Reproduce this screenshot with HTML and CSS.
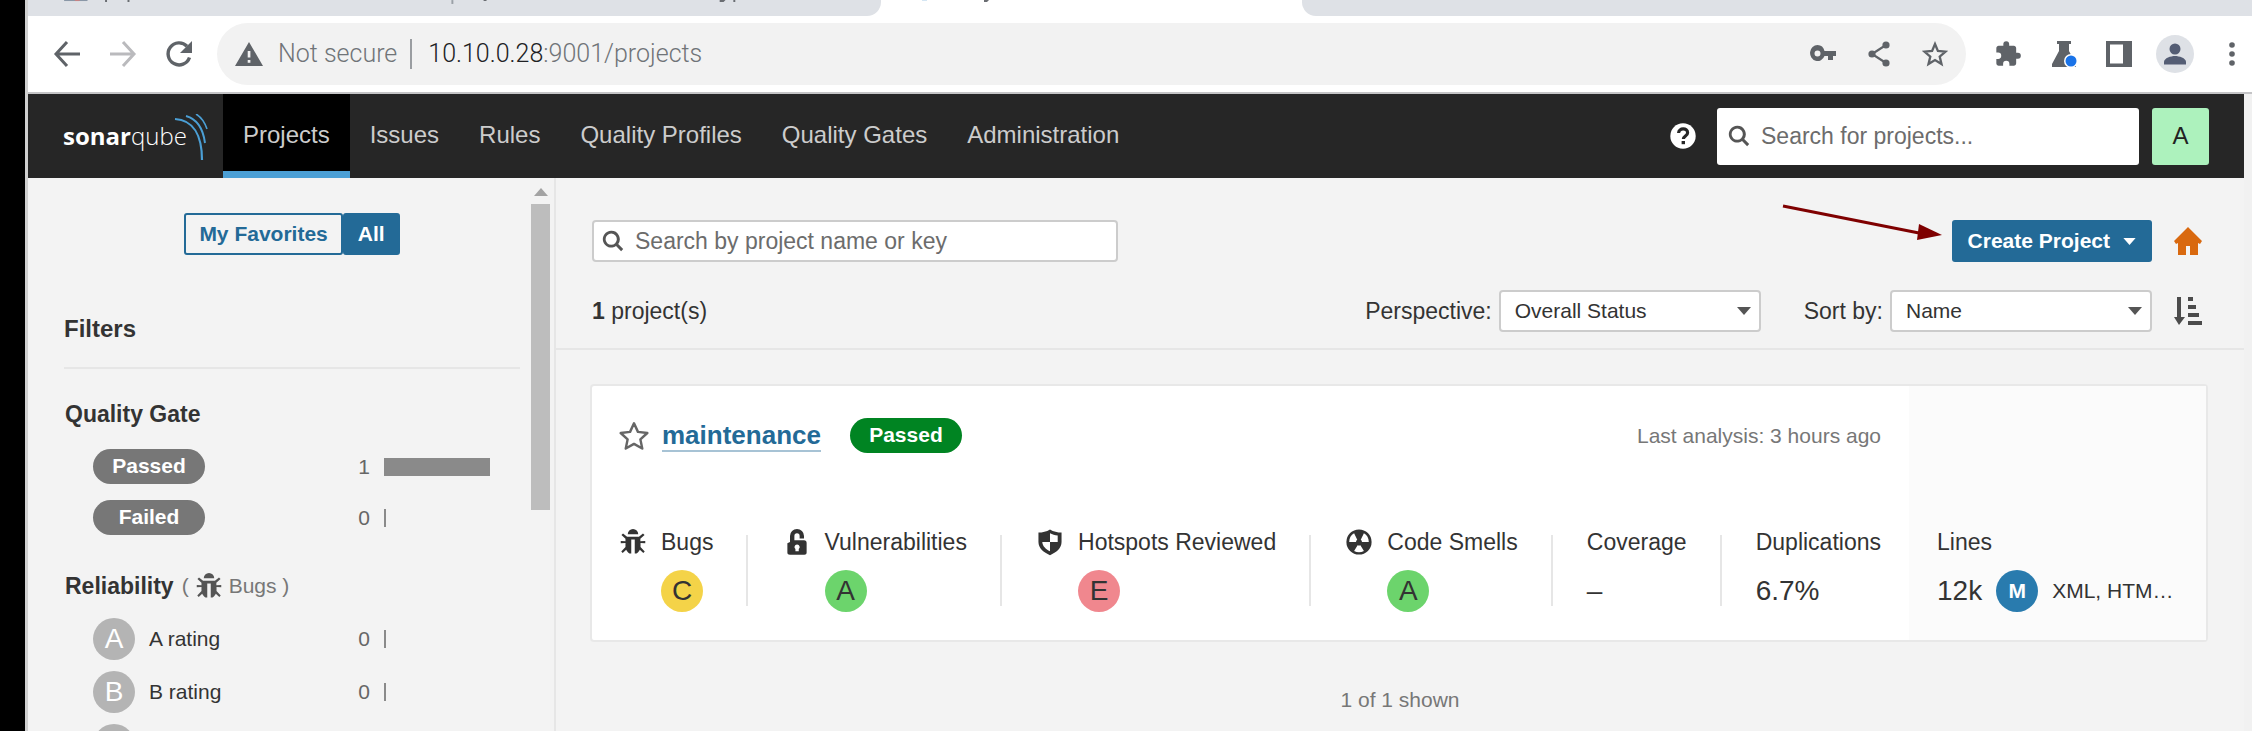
FILE: index.html
```html
<!DOCTYPE html>
<html lang="en">
<head>
<meta charset="utf-8">
<title>Projects</title>
<link rel="stylesheet" href="styles.css">
</head>
<body>
<svg class="sprite" aria-hidden="true">
  <symbol id="bug" viewBox="0 0 16 16"><path d="M5 3.600a3 3 0 0 1 6 0zM12.200 7.600 15 7.400v1.300l-2.700-.1v2.200l2.400 2.600-.8.9-2-1.900c-.4.9-1 1.600-1.900 2.100H9V6.500H7v8H6c-.9-.5-1.500-1.200-1.900-2.100l-2 1.900-.8-.9 2.400-2.600V8.600L1 8.700V7.400l2.700.2V6.200L1.400 4l.9-.8L4.600 5h6.800l2.300-1.800.9.800-2.400 2.200z"/></symbol>
  <symbol id="search" viewBox="0 0 16 16"><path fill-rule="evenodd" d="M6.700.6a6.100 6.100 0 1 0 3.500 11.100l3.700 3.700 1.500-1.500-3.600-3.700A6.100 6.100 0 0 0 6.700.6zm0 2a4.100 4.100 0 1 1 0 8.200 4.100 4.100 0 0 1 0-8.200z"/></symbol>
  <symbol id="star" viewBox="0 0 16 16"><path d="M8 1.200l2.100 4.600 5 .6-3.700 3.400 1 4.900L8 12.200l-4.400 2.500 1-4.900L.9 6.400l5-.6z" fill="none" stroke="currentColor" stroke-width="1.300" stroke-linejoin="round"/></symbol>
  <symbol id="caret" viewBox="0 0 14 8"><path d="M0 0h14L7 8z"/></symbol>
</svg>
<div class="edge"></div>
<div class="window">
  <header class="chrome">
    <div class="tabs">
      <svg class="tab-marks" width="860" height="5" viewBox="0 0 860 5" aria-hidden="true"><path fill="#8593a3" d="M37 0h24v1H37z"/><path fill="#c98080" d="M48 0h5v1h-5z"/><path fill="#6a6d72" d="M79 0h2v2h-2zM102 0h2v2h-2zM467 0h3v1h-3zM709 0h6l-2 2h-4zM723 0h2v2h-2z"/><path fill="#9aa0a6" d="M434 0h2v4h-2z"/></svg>
      <div class="tab-active"><svg width="134" height="4" viewBox="0 0 134 4" aria-hidden="true"><path fill="#6a6d72" d="M117 0h5l-2 2h-3z"/><path fill="#d5e6f3" d="M55 0h5v1h-5z"/></svg></div>
    </div>
    <div class="toolbar">
      <button class="tool" aria-label="Back"><svg width="28" height="28" viewBox="0 0 28 28"><path d="M14 2 3 14l11 12M3 14h24" fill="none" stroke="#5f6368" stroke-width="3"/></svg></button>
      <button class="tool" aria-label="Forward"><svg width="28" height="28" viewBox="0 0 28 28"><path d="M14 2l11 12-11 12M25 14H1" fill="none" stroke="#bababd" stroke-width="3"/></svg></button>
      <button class="tool" aria-label="Reload"><svg width="28" height="28" viewBox="0 0 28 28"><path d="M24.500 17.500A11 11 0 1 1 22 6.200" fill="none" stroke="#5f6368" stroke-width="3.400"/><path d="M27 1v12H15z" fill="#5f6368"/></svg></button>
      <div class="address">
        <svg width="28" height="24" viewBox="0 0 28 24"><path fill="#5f6368" fill-rule="evenodd" d="M14 0 0 24h28zM12.700 9h2.700v6.500h-2.700zm0 9h2.700v2.700h-2.700z"/></svg>
        <span class="insecure">Not secure</span>
        <span class="url"><b>10.10.0.28</b>:9001/projects</span>
        <button class="tool" aria-label="Passwords"><svg width="26" height="26" viewBox="0 0 26 26"><path fill="#5f6368" fill-rule="evenodd" d="M7.500 4a7.500 8 0 1 0 7 11H18v4h5v-4h3v-5H14.500a7.500 8 0 0 0-7-6zm0 5.500a3 3 0 1 1 0 6 3 3 0 0 1 0-6z"/></svg></button>
        <button class="tool" aria-label="Share"><svg width="26" height="26" viewBox="0 0 26 26"><path d="M20 4 6 13l14 9" fill="none" stroke="#5f6368" stroke-width="2.200"/><g fill="#5f6368"><circle cx="20" cy="4" r="3.600"/><circle cx="6" cy="13" r="3.600"/><circle cx="20" cy="22" r="3.600"/></g></svg></button>
        <button class="tool" aria-label="Bookmark"><svg width="26" height="26" viewBox="0 0 26 26"><path d="M13 3l2.900 7 7.600.6-5.800 5 1.800 7.400-6.500-4-6.500 4 1.800-7.400-5.800-5 7.600-.6z" fill="none" stroke="#5f6368" stroke-width="2.300"/></svg></button>
      </div>
      <div class="extensions">
        <button class="tool" aria-label="Extensions"><svg width="28" height="28" viewBox="0 0 24 24"><path fill="#5f6368" d="M20.500 11H19V7c0-1.100-.9-2-2-2h-4V3.500a2.500 2.500 0 0 0-5 0V5H4c-1.100 0-2 .9-2 2v3.800h1.500a2.700 2.700 0 0 1 0 5.400H2V20c0 1.100.9 2 2 2h3.800v-1.500a2.700 2.700 0 0 1 5.400 0V22H17c1.100 0 2-.9 2-2v-4h1.500a2.500 2.500 0 0 0 0-5z"/></svg></button>
        <button class="tool" aria-label="Labs"><svg width="28" height="28" viewBox="0 0 28 28"><path fill="#5f6368" d="M7 1h14v3h-2v7l7 13v3H2v-3l7-13V4H7z"/><circle cx="21" cy="21" r="7" fill="#fff"/><circle cx="21" cy="21" r="5.500" fill="#1a73e8"/></svg></button>
        <button class="tool" aria-label="Side panel"><svg width="26" height="26" viewBox="0 0 26 26"><path fill="#5f6368" fill-rule="evenodd" d="M0 0h26v26H0zM4 3.500h13v19H4z"/></svg></button>
        <button class="tool profile" aria-label="Profile"><svg width="38" height="38" viewBox="0 0 38 38"><circle cx="19" cy="19" r="19" fill="#dee1e6"/><circle cx="19" cy="14" r="5.500" fill="#545d74"/><path d="M8 29.500v-2.500c0-4 7-6 11-6s11 2 11 6v2.500z" fill="#545d74"/></svg></button>
        <button class="tool" aria-label="Menu"><svg width="6" height="26" viewBox="0 0 6 26" fill="#5f6368"><circle cx="3" cy="4" r="2.800"/><circle cx="3" cy="13" r="2.800"/><circle cx="3" cy="22" r="2.800"/></svg></button>
      </div>
    </div>
  </header>

  <div class="viewport">
    <div class="app">
      <nav class="navbar">
        <a class="logo" href="#"><strong>sonar</strong>qube<svg class="waves" width="34" height="48" viewBox="0 0 34 48" fill="none" stroke="#4b9fd5"><path d="M1 5c18 1 27 16 27 41" stroke-width="2.200"/><path d="M12 2c11 3 17 12 19 27" stroke-width="2"/><path d="M22 0c5 3 9 9 11 15" stroke-width="1.600"/></svg></a>
        <a class="nav-item current" href="#">Projects</a>
        <a class="nav-item" href="#">Issues</a>
        <a class="nav-item" href="#">Rules</a>
        <a class="nav-item" href="#">Quality Profiles</a>
        <a class="nav-item" href="#">Quality Gates</a>
        <a class="nav-item" href="#">Administration</a>
        <button class="help" aria-label="Help"><svg width="26" height="26" viewBox="0 0 26 26"><circle cx="13" cy="13" r="12.700" fill="#fff"/><path d="M8.600 10c.2-5.400 9-5.400 9-.3 0 3.300-4.200 3.200-4.200 6.300" fill="none" stroke="#262626" stroke-width="3.200"/><path fill="#262626" d="M11.600 18h3.400v3.200h-3.400z"/></svg></button>
        <label class="global-search"><svg class="glyph" width="22" height="22"><use href="#search"/></svg><input type="search" placeholder="Search for projects..." aria-label="Search for projects"></label>
        <button class="avatar">A</button>
      </nav>

      <div class="columns">
        <aside class="sidebar">
          <div class="side-content">
            <div class="toggle"><button>My Favorites</button><button class="on">All</button></div>
            <h2 class="filters">Filters</h2>
            <h3 class="facet">Quality Gate</h3>
            <ul class="facet-list">
              <li><span class="pill gray">Passed</span><span class="count">1</span><span class="bar full"></span></li>
              <li><span class="pill gray">Failed</span><span class="count">0</span><span class="bar"></span></li>
            </ul>
            <h3 class="facet">Reliability <span class="note">( <svg class="glyph" width="28" height="28"><use href="#bug"/></svg> Bugs )</span></h3>
            <ul class="facet-list ratings">
              <li><span class="rating off">A</span><span class="rating-name">A rating</span><span class="count">0</span><span class="bar"></span></li>
              <li><span class="rating off">B</span><span class="rating-name">B rating</span><span class="count">0</span><span class="bar"></span></li>
              <li><span class="rating off"></span></li>
            </ul>
          </div>
          <div class="scrollbar"><svg width="14" height="8" viewBox="0 0 14 8"><path d="M0 8h14L7 0z" fill="#a3a3a3"/></svg><div class="thumb"></div></div>
        </aside>

        <main class="main">
          <div class="controls">
            <div class="row">
              <label class="project-search"><svg class="glyph" width="22" height="22"><use href="#search"/></svg><input type="search" placeholder="Search by project name or key" aria-label="Search by project name or key"></label>
              <div class="create">
                <svg class="arrow" width="160" height="36" viewBox="0 0 160 36" aria-hidden="true"><path d="M1 2l136 27" stroke="#7f0000" stroke-width="3"/><path d="M137 20l23 11-25 5z" fill="#7f0000"/></svg>
                <button class="create-button">Create Project <svg width="13" height="7"><use href="#caret"/></svg></button>
              </div>
              <button class="tool home" aria-label="Homepage"><svg width="28" height="28" viewBox="0 0 28 28"><path fill="#d9690f" d="M14 0 0 14l2 3 2-1v12h8v-9h4v9h8V16l2 1 2-3z"/></svg></button>
            </div>
            <div class="row">
              <p class="total"><strong>1</strong> project(s)</p>
              <label class="picker perspective">Perspective:<span class="select"><select><option>Overall Status</option></select><svg width="14" height="8"><use href="#caret"/></svg></span></label>
              <label class="picker">Sort by:<span class="select"><select><option>Name</option></select><svg width="14" height="8"><use href="#caret"/></svg></span></label>
              <button class="tool sort" aria-label="Sort order"><svg width="28" height="28" viewBox="0 0 28 28" fill="#4b4b4b"><path d="M3 0h4v20h4L5 28l-5-8h3zM14 0h5v4h-5zM14 8h8v4h-8zM14 16h11v4H14zM14 24h14v4H14z"/></svg></button>
            </div>
          </div>

          <article class="card">
            <div class="card-main">
              <div class="card-head">
                <button class="tool fav" aria-label="Add to favorites"><svg width="30" height="30"><use href="#star"/></svg></button>
                <a class="project" href="#">maintenance</a>
                <span class="pill green">Passed</span>
                <span class="analysis">Last analysis: 3 hours ago</span>
              </div>
              <div class="metrics">
                <div class="metric with-icon"><svg class="icon" width="28" height="28"><use href="#bug"/></svg><span class="name">Bugs</span><span class="value"><span class="rating c">C</span></span></div>
                <div class="metric with-icon"><svg class="icon" width="28" height="28" viewBox="0 0 16 16"><path fill-rule="evenodd" d="M4 8V4.500a4 4 0 0 1 8 0V6H9.500V4.500a1.500 1.500 0 0 0-3 0V7H12c1 0 1.500.5 1.500 1.500V14c0 .8-.5 1.300-1.300 1.300H4c-1 0-1.500-.5-1.500-1.300V8.700zM8 9.500a1.400 1.400 0 0 0-.9 2.500v1.300h1.900V12A1.400 1.400 0 0 0 8 9.500z"/></svg><span class="name">Vulnerabilities</span><span class="value"><span class="rating a">A</span></span></div>
                <div class="metric with-icon"><svg class="icon" width="28" height="28" viewBox="0 0 16 16"><path fill-rule="evenodd" d="M8 .8C10 2 12.300 2.600 14.600 2.600V8c0 3.500-3 6-6.600 7.500C4.400 14 1.400 11.500 1.400 8V2.600C3.700 2.600 6 2 8 .8zM8 3v5H3.600c.1 2.300 1.900 4.100 4.400 5.300V8h4.400V4.300C10.800 4.200 9.300 3.700 8 3z"/></svg><span class="name">Hotspots Reviewed</span><span class="value"><span class="rating e">E</span></span></div>
                <div class="metric with-icon"><svg class="icon" width="28" height="28" viewBox="0 0 16 16"><path fill-rule="evenodd" d="M8 .8a7.200 7.200 0 1 0 0 14.400A7.200 7.200 0 0 0 8 .8zM5.200 3 7 6.700C6.500 7.100 6.300 7.500 6.300 8H2.400c0-2.200 1-4 2.800-5zm5.600 0c1.800 1 2.800 2.800 2.800 5H9.700c0-.5-.2-.9-.7-1.300zM8 10c.3 0 .6-.1.800-.2l2 3.300c-1.800 1-3.800 1-5.600 0l2-3.300c.2.100.5.200.8.200z"/></svg><span class="name">Code Smells</span><span class="value"><span class="rating a">A</span></span></div>
                <div class="metric"><span class="name">Coverage</span><span class="value">–</span></div>
                <div class="metric"><span class="name">Duplications</span><span class="value">6.7%</span></div>
              </div>
            </div>
            <div class="card-side">
              <div class="metric"><span class="name">Lines</span><span class="value">12k <span class="rating size">M</span><span class="langs">XML, HTM…</span></span></div>
            </div>
          </article>
          <p class="shown">1 of 1 shown</p>
        </main>
      </div>
    </div>
    <div class="page-scroll"></div>
  </div>
</div>
</body>
</html>
```

FILE: styles.css
```css
* { box-sizing: border-box; }

body {
  margin: 0;
  height: 100vh;
  display: flex;
  overflow: hidden;
  background: #f3f3f3;
  color: #333;
  font: 23px/28px "Liberation Sans", Arial, sans-serif;
}

h2, h3, p, ul { margin: 0; padding: 0; }
ul { list-style: none; }
a { text-decoration: none; }
svg { display: block; flex: none; }
.sprite { position: absolute; width: 0; height: 0; }
button { font: inherit; cursor: pointer; }
input, select { font: inherit; color: inherit; }

.tool {
  display: flex;
  flex: none;
  padding: 0;
  border: 0;
  background: none;
  color: #666;
}

.edge { flex: none; width: 28px; background: #000; border-right: 3px solid #d0d0d0; }
.window { flex: 1; min-width: 0; display: flex; flex-direction: column; }

/* Browser chrome */
.chrome { flex: none; background: #fff; border-bottom: 2px solid #c4c4c6; }
.tabs { display: flex; height: 16px; background: #dee1e6; }
.tab-marks { width: 839px; height: 5px; }
.tabs .tab-marks { overflow: hidden; }
.tab-active { width: 449px; background: #fff; position: relative; }
.tab-active svg { position: relative; z-index: 1; }
.tab-active::before, .tab-active::after {
  content: "";
  position: absolute;
  bottom: 0;
  width: 14px;
  height: 16px;
  background: #dee1e6;
}
.tab-active::before { left: 0; border-bottom-right-radius: 14px; }
.tab-active::after { right: 0; border-bottom-left-radius: 14px; }

.toolbar { display: flex; align-items: center; gap: 28px; padding: 7px 17px 7px 25px; }
.address {
  flex: 1;
  display: flex;
  align-items: center;
  gap: 30px;
  height: 62px;
  margin-left: -4px;
  padding: 0 18px;
  border-radius: 31px;
  background: #f2f2f2;
  color: #707478;
  font: 300 25px/30px Roboto, sans-serif;
}
.insecure { margin-left: -15px; padding-right: 13px; border-right: 2px solid #9a9da1; }
.url { flex: 1; margin-left: -14px; }
.url b { font-weight: 300; color: #202124; }
.extensions { display: flex; align-items: center; gap: 28px; }
.extensions .profile { margin-left: -4px; }
.extensions .tool:last-child { margin-left: 7px; }

/* Page */
.viewport { flex: 1; min-height: 0; display: flex; }
.page-scroll { flex: none; width: 8px; background: #f1f1f1; }
.app { flex: 1; min-width: 0; display: flex; flex-direction: column; }

.navbar {
  flex: none;
  display: flex;
  height: 84px;
  align-items: center;
  padding-right: 35px;
  background: #262626;
}
.logo {
  position: relative;
  width: 195px;
  padding-left: 35px;
  color: #fff;
  font: 300 24px/32px "Open Sans", sans-serif;
}
.logo strong { font-weight: 700; }
.waves { position: absolute; left: 146px; top: -6px; }
.nav-item {
  align-self: stretch;
  padding: 0 20px;
  border-bottom: 7px solid transparent;
  color: #ccc;
  font-size: 24px;
  line-height: 82px;
  white-space: nowrap;
}
.nav-item.current { background: #000; border-color: #4b9fd5; }
.help { margin-left: auto; padding: 0; border: 0; background: none; }
.global-search {
  display: flex;
  align-items: center;
  gap: 11px;
  width: 422px;
  height: 57px;
  margin: 0 13px 0 21px;
  padding: 0 11px;
  border-radius: 3px;
  background: #fff;
}
.glyph { fill: #555; }
label input {
  flex: 1;
  min-width: 0;
  padding: 0;
  border: 0;
  outline: 0;
  background: none;
}
input::placeholder { color: #6c6c6c; opacity: 1; }
.avatar { width: 57px; height: 57px; padding: 0; border: 0; border-radius: 3px; background: #adf2bd; color: #222; font-size: 24px; }

.columns { flex: 1; min-height: 0; display: flex; }

/* Sidebar */
.sidebar { flex: none; width: 528px; display: flex; border-right: 2px solid #e6e6e6; overflow: hidden; }
.side-content { flex: 1; padding: 35px 11px 0 36px; }
.toggle { display: flex; width: max-content; margin: 0 auto; }
.toggle button {
  height: 42px;
  padding: 0 13px;
  border: 2px solid #236a97;
  border-radius: 3px;
  background: none;
  color: #236a97;
  font-size: 21px;
  font-weight: 700;
}
.toggle .on { background: #236a97; color: #fff; }
.filters {
  margin-top: 60px;
  padding-bottom: 24px;
  border-bottom: 2px solid #e6e6e6;
  font-size: 24px;
  line-height: 28px;
}
.facet { display: flex; align-items: center; gap: 8px; margin: 31px 0 0 1px; font-size: 23px; line-height: 28px; }
.note { display: flex; align-items: center; gap: 6px; color: #777; font-size: 21px; font-weight: 400; }
.facet-list { display: grid; gap: 16px; padding: 21px 30px 6px 29px; }
.facet-list li { display: flex; align-items: center; color: #666; font-size: 21px; }
.pill {
  width: 112px;
  height: 35px;
  border-radius: 18px;
  color: #fff;
  font-size: 21px;
  font-weight: 700;
  line-height: 34px;
  text-align: center;
}
.pill.gray { background: #777; }
.pill.green { background: #008422; }
.count { margin-left: auto; padding-right: 14px; }
.bar { width: 106px; height: 18px; border-left: 2px solid #8a8a8a; }
.bar.full { background: #8a8a8a; }
.ratings { gap: 11px; padding-top: 18px; }
.rating {
  width: 42px;
  height: 42px;
  border-radius: 50%;
  font-size: 28px;
  line-height: 41px;
  text-align: center;
}
.rating.off { background: #b4b4b4; color: #fff; }
.rating.a { background: #6cd46c; }
.rating.c { background: #f4d348; }
.rating.e { background: #f0878e; }
.rating.size { background: #297bae; color: #fff; font-size: 21px; font-weight: 700; }
.rating-name { margin-left: 14px; color: #333; }
.scrollbar { display: flex; flex-direction: column; align-items: center; gap: 8px; width: 23px; padding: 10px 4px 0 0; }
.thumb { width: 19px; height: 306px; background: #bdbdbd; }

/* Project list */
.main { flex: 1; min-width: 0; }
.controls {
  display: grid;
  gap: 28px;
  padding: 42px 42px 16px 36px;
  border-bottom: 2px solid #e6e6e6;
}
.row { display: flex; align-items: center; }
.project-search {
  display: flex;
  align-items: center;
  gap: 11px;
  width: 526px;
  height: 42px;
  padding: 0 8px;
  border: 2px solid #ccc;
  border-radius: 4px;
  background: #fff;
}
.create { position: relative; margin-left: auto; }
.arrow { position: absolute; right: 210px; top: -16px; }
.create-button {
  display: flex;
  align-items: center;
  gap: 13px;
  height: 42px;
  padding: 0 16px;
  border: 0;
  border-radius: 3px;
  background: #236a97;
  color: #fff;
  fill: #fff;
  font-size: 21px;
  font-weight: 700;
}
.home, .sort { margin-left: 22px; }
.picker { display: flex; align-items: center; gap: 7px; margin-left: 43px; }
.perspective { margin-left: auto; }
.select { position: relative; width: 262px; }
.select select {
  display: block;
  width: 100%;
  height: 42px;
  padding: 0 14px;
  appearance: none;
  border: 2px solid #ccc;
  border-radius: 4px;
  background: #fff;
  font-size: 21px;
}
.select svg { position: absolute; right: 10px; top: 17px; fill: #555; pointer-events: none; }

.card {
  display: flex;
  height: 258px;
  margin: 34px 36px 0 34px;
  border: 2px solid #e8e8e8;
  border-radius: 4px;
  background: #fff;
}
.card-main { flex: 1; min-width: 0; padding: 32px 28px 0 27px; }
.card-head { display: flex; align-items: center; height: 35px; }
.fav { margin-right: 13px; }
.project {
  margin-right: 29px;
  border-bottom: 2px solid #a7c3d5;
  color: #236a97;
  font-size: 26px;
  font-weight: 700;
  line-height: 30px;
}
.analysis { margin-left: auto; color: #777; font-size: 21px; }
.metrics { display: flex; justify-content: space-between; margin-top: 75px; }
.metric { position: relative; display: grid; row-gap: 14px; align-items: center; }
.with-icon { grid-template-columns: auto auto; column-gap: 14px; }
.with-icon .value { grid-column: 2; }
.metrics .metric:not(:last-child) { padding-right: 35px; }
.metrics .metric:not(:last-child)::after {
  content: "";
  position: absolute;
  right: 0;
  top: 7px;
  height: 71px;
  border-right: 2px solid #e6e6e6;
}
.value { display: flex; align-items: center; height: 42px; font-size: 28px; }
.icon { fill: #333; }
.card-side { flex: none; width: 297px; padding: 142px 28px 0 28px; background: #fbfbfb; }
.card-side .rating { flex: none; margin: 0 14px; }
.langs { white-space: nowrap; font-size: 21px; }
.shown { margin-top: 44px; color: #777; font-size: 21px; text-align: center; }
```
